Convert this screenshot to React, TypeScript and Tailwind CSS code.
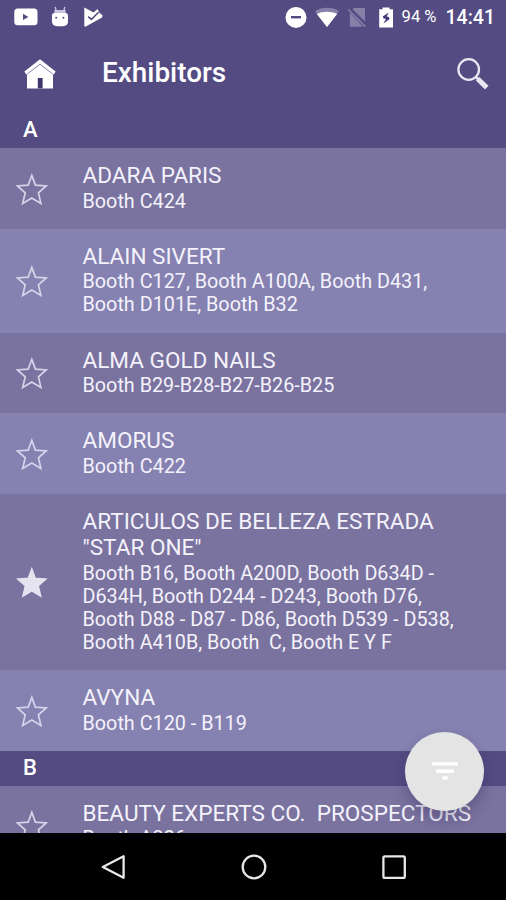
type Exhibitor = {
  name: string[];
  booths: string[];
  favorite?: boolean;
};

const sectionA: Exhibitor[] = [
  { name: ["ADARA PARIS"], booths: ["Booth C424"] },
  {
    name: ["ALAIN SIVERT"],
    booths: ["Booth C127, Booth A100A, Booth D431,", "Booth D101E, Booth B32"],
  },
  { name: ["ALMA GOLD NAILS"], booths: ["Booth B29-B28-B27-B26-B25"] },
  { name: ["AMORUS"], booths: ["Booth C422"] },
  {
    name: ["ARTICULOS DE BELLEZA ESTRADA", '"STAR ONE"'],
    booths: [
      "Booth B16, Booth A200D, Booth D634D -",
      "D634H, Booth D244 - D243, Booth D76,",
      "Booth D88 - D87 - D86, Booth D539 - D538,",
      "Booth A410B, Booth  C, Booth E Y F",
    ],
    favorite: true,
  },
  { name: ["AVYNA"], booths: ["Booth C120 - B119"] },
];

const sectionB: Exhibitor[] = [
  { name: ["BEAUTY EXPERTS CO.  PROSPECTORS"], booths: ["Booth A326"] },
];

function StarIcon({ filled }: { filled?: boolean }) {
  return (
    <svg viewBox="0 0 34 34" width="34" height="34" className="shrink-0">
      <path
        d="M16.8 3.4 L20.4 13.1 L31.2 13.9 L23.4 20.8 L25.9 31.4 L16.8 25.9 L7.7 31.4 L10.2 20.8 L2.4 13.9 L13.2 13.1 Z"
        fill={filled ? "#e6e3f0" : "none"}
        stroke={filled ? "#e6e3f0" : "#d6d3ea"}
        strokeWidth={filled ? 1.2 : 1.7}
      />
    </svg>
  );
}

function StatusBar() {
  return (
    <div className="flex h-[34px] shrink-0 items-center justify-between pr-[11px] pl-[14px] text-white">
      <div className="flex items-center gap-[13px]">
        {/* YouTube */}
        <svg viewBox="0 0 24 18" width="24" height="18">
          <rect x="0.3" y="0.6" width="23.2" height="16.6" rx="3.5" fill="#fff" />
          <path d="M9 5.8 L14.4 8.9 L9 12 Z" fill="#544b83" />
        </svg>
        {/* Android head */}
        <svg viewBox="0 0 18 22" width="18" height="22">
          <path d="M4.2 0.8 L5.2 5 M13.8 0.8 L12.8 5" stroke="#c9c5de" strokeWidth="1.4" />
          <rect x="3.4" y="4" width="11.2" height="4" fill="#c9c5de" />
          <path d="M1 9.5 C1 7.8 2 7 3.6 7 H14.4 C16 7 17 7.8 17 9.5 V15.6 C17 18.6 15 20.2 12 20.2 H6 C3 20.2 1 18.6 1 15.6 Z" fill="#fff" />
          <circle cx="5.2" cy="11.7" r="1" fill="#544b83" />
          <circle cx="12.4" cy="11.7" r="1" fill="#544b83" />
        </svg>
        {/* Play with check */}
        <svg viewBox="0 0 22 22" width="22" height="22" className="ml-px">
          <path d="M1.3 1.6 L10.6 6.6 L14.5 3 L16.2 6.4 L19.6 9.4 L19 11.4 L2.4 20.8 L1.3 20 Z" fill="#fff" />
          <path d="M5.2 10.6 L8.4 13.4 L15.6 6.2" fill="none" stroke="#544b83" strokeWidth="1.6" />
        </svg>
      </div>
      <div className="flex items-center">
        <svg viewBox="0 0 22 22" width="22" height="22">
          <circle cx="11" cy="11.4" r="10.5" fill="#fff" />
          <rect x="6" y="10" width="10" height="2.4" fill="#544b83" />
        </svg>
        <svg viewBox="0 0 26 22" width="26" height="22" className="ml-[7px]">
          <path d="M1 5.3 C7.5 0.7 18.5 0.7 25 5.3 L13 21 Z" fill="#8580a8" />
          <path d="M2.8 8 C8.5 5 17.5 5 23.2 8 L13 21 Z" fill="#fff" />
        </svg>
        <svg viewBox="0 0 20 22" width="20" height="22" className="ml-[7px]">
          <path d="M7 2 H18 V15.6 L5.6 3.3 Z M2.8 6.6 L16 20.8 H2.8 Z" fill="#8580a8" />
          <path d="M1 3.2 L18.4 20.6" stroke="#8580a8" strokeWidth="1.5" />
        </svg>
        <svg viewBox="0 0 16 22" width="16" height="22" className="ml-[11px]">
          <path d="M1.2 3.2 H4.6 V1.6 H11.6 V3.2 H15 V21.4 H1.2 Z" fill="#fff" />
          <path d="M10.8 6.6 L4.8 10.4 L5.6 12.6 L8 12.8 L5.4 17.4 L11.6 13 L10.8 11 L8.6 10.6 Z" fill="#3f3577" />
        </svg>
        <span className="mt-px ml-[8px] text-[16.6px] leading-none whitespace-pre">94 %</span>
        <span className="mt-px ml-[9px] text-[19.5px] leading-none font-medium">14:41</span>
      </div>
    </div>
  );
}

function AppBar() {
  return (
    <header className="flex h-[79.4px] shrink-0 items-center pr-[16px] pl-[24px]">
      <svg viewBox="0 0 32 32" width="32" height="32">
        <path d="M3 14.8 L16 5 L29 14.8 V30.4 H3 Z" fill="#fff" />
        <path d="M16 1.2 L31.6 13.6 L29.8 16.4 L16 5.6 L2.2 16.4 L0.4 13.6 Z" fill="#fff" />
        <path d="M2.2 16.8 L16 6.2 L29.8 16.8" fill="none" stroke="#8a84b0" strokeWidth="1" />
        <rect x="13.8" y="20" width="4.8" height="10.4" fill="#40366f" />
      </svg>
      <h1 className="mb-[2px] ml-[46px] flex-1 text-[27.9px] leading-none font-medium text-white">Exhibitors</h1>
      <svg viewBox="0 0 34 34" width="34" height="34">
        <circle cx="12.7" cy="12.5" r="10.3" fill="none" stroke="#e9e6f3" strokeWidth="2.3" />
        <path d="M19.4 19.6 L22.4 22.4" stroke="#e9e6f3" strokeWidth="2.6" />
        <path d="M21.6 21.8 L30.8 30.6" stroke="#e9e6f3" strokeWidth="5" />
      </svg>
    </header>
  );
}

function SectionHeader({ letter }: { letter: string }) {
  return (
    <div className="flex h-[35px] shrink-0 items-center bg-[#544b83] pb-[1.6px] pl-[23px] text-[22px] leading-none font-medium text-white">
      {letter}
    </div>
  );
}

function ExhibitorRow({ item }: { item: Exhibitor }) {
  return (
    <li className="flex shrink-0 items-center pl-[15px] odd:bg-[#7a729f] even:bg-[#8581b0]">
      <StarIcon filled={item.favorite} />
      <div className="ml-[33.5px] pt-[15px] pb-[16.2px] whitespace-pre text-[#f4f2fb]">
        {item.name.map((line) => (
          <div key={line} className="text-[22.55px] leading-[26.4px]">
            {line}
          </div>
        ))}
        {item.booths.map((line) => (
          <div key={line} className="text-[19.8px] leading-[23.05px]">
            {line}
          </div>
        ))}
      </div>
    </li>
  );
}

function NavBar() {
  return (
    <nav className="flex h-[67px] shrink-0 items-center justify-between bg-black pr-[97px] pl-[98px]">
      <svg viewBox="0 0 30 30" width="30" height="30">
        <path d="M25.6 4.2 V25.8 L4.8 15 Z" fill="none" stroke="#e8e8e8" strokeWidth="2.3" strokeLinejoin="round" />
      </svg>
      <svg viewBox="0 0 30 30" width="30" height="30">
        <circle cx="15" cy="15" r="11.3" fill="none" stroke="#e8e8e8" strokeWidth="2.3" />
      </svg>
      <svg viewBox="0 0 30 30" width="30" height="30">
        <rect x="4.4" y="4.4" width="21.4" height="21.4" rx="1.4" fill="none" stroke="#e8e8e8" strokeWidth="2.3" />
      </svg>
    </nav>
  );
}

export default function App() {
  return (
    <div className="relative flex h-[900px] w-[506px] flex-col overflow-hidden bg-[#544b83] font-['Roboto',sans-serif]">
      <StatusBar />
      <AppBar />
      <main className="flex min-h-0 flex-1 flex-col overflow-hidden">
        <SectionHeader letter="A" />
        <ul className="flex shrink-0 flex-col">
          {sectionA.map((item) => (
            <ExhibitorRow key={item.name[0]} item={item} />
          ))}
        </ul>
        <SectionHeader letter="B" />
        <ul className="flex shrink-0 flex-col">
          {sectionB.map((item) => (
            <ExhibitorRow key={item.name[0]} item={item} />
          ))}
        </ul>
      </main>
      <NavBar />

      {/* Filter button floats over the list */}
      <button
        aria-label="Filter"
        className="absolute top-[731.5px] left-[405px] flex h-[79px] w-[79px] items-center justify-center rounded-full bg-[#e4e4e4] shadow-[0_8px_14px_rgba(40,30,80,0.3)]"
      >
        <svg viewBox="0 0 28 20" width="28" height="20">
          <path d="M1 2.9 H27 M5.2 10.2 H22.8 M11.4 17 H16.6" stroke="#fff" strokeWidth="3.4" />
        </svg>
      </button>
    </div>
  );
}
